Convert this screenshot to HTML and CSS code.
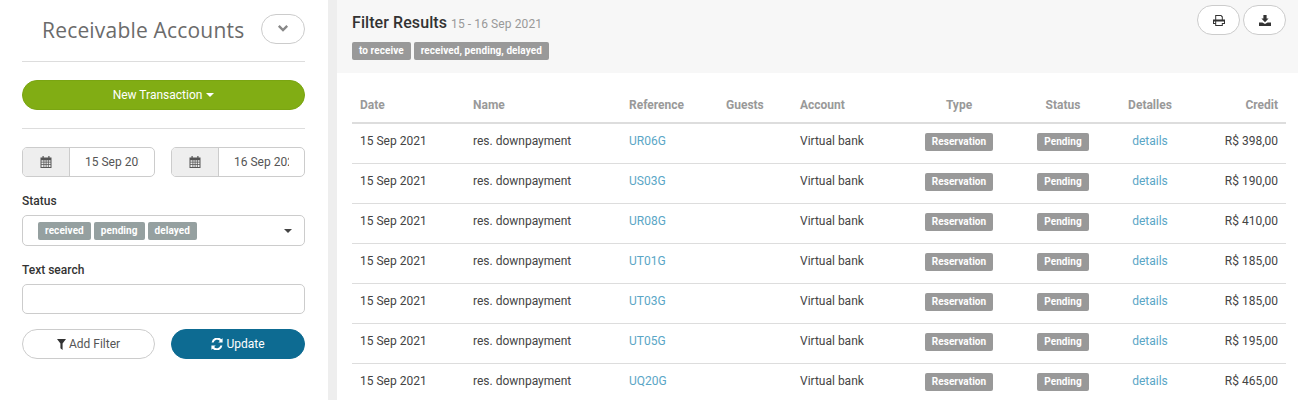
FILE: index.html
```html
<!DOCTYPE html>
<html lang="en">
<head>
<meta charset="utf-8">
<title>Receivable Accounts</title>
<link rel="stylesheet" href="styles.css">
</head>
<body>
<svg class="defs" width="0" height="0" aria-hidden="true">
  <symbol id="i-cal" viewBox="0 0 12 12"><path fill="currentColor" fill-rule="evenodd" d="M2.5 0h1.2v1.6h4.6V0h1.2v1.6H11.5V12H.5V1.6h2zM1.5 4.2v1.6h2V4.2zm2.800 0v1.600h1.400V4.200zm2.200 0v1.600h1.400V4.200zm2.200 0v1.600h1.800V4.200zM1.500 6.600v1.600h2V6.600zm2.800 0v1.600h1.400V6.600zm2.200 0v1.600h1.400V6.600zm2.200 0v1.600h1.800V6.600zM1.500 9v2h2V9zm2.800 0v2h1.400V9zm2.200 0v2h1.400V9zm2.200 0v2h1.800V9z"/></symbol>
</svg>
<div class="page">
  <aside class="side">
    <div class="side-head">
      <h1 class="side-title">Receivable Accounts</h1>
      <button class="btn chevron-btn" type="button" aria-label="Collapse">
        <svg width="12" height="9" viewBox="0 0 12 9"><path d="M1.800 1.800 6 6l4.200-4.200" fill="none" stroke="#888" stroke-width="2.400"/></svg>
      </button>
    </div>
    <hr class="rule">
    <button class="btn new-btn" type="button">New Transaction <span class="caret caret-white"></span></button>
    <hr class="rule rule-lower">
    <div class="dates">
      <div class="date-group date-from">
        <span class="date-addon"><svg class="cal" width="12" height="12"><use href="#i-cal"/></svg></span>
        <span class="date-value">15 Sep 2021</span>
      </div>
      <div class="date-group date-to">
        <span class="date-addon"><svg class="cal" width="12" height="12"><use href="#i-cal"/></svg></span>
        <span class="date-value">16 Sep 2021</span>
      </div>
    </div>
    <label class="field-label status-label">Status</label>
    <div class="select-box">
      <span class="tag tag-slate">received</span>
      <span class="tag tag-slate">pending</span>
      <span class="tag tag-slate">delayed</span>
      <span class="caret caret-dark select-caret"></span>
    </div>
    <label class="field-label search-label">Text search</label>
    <div class="text-input"></div>
    <div class="actions">
      <button class="btn filter-btn" type="button">
        <svg width="9" height="11" viewBox="0 0 10 11" preserveAspectRatio="none"><path d="M0 0h10L6.200 4.600V11L3.800 9.200V4.600z" fill="#333"/></svg>
        Add Filter
      </button>
      <button class="btn update-btn" type="button">
        <svg width="12" height="12" viewBox="0 0 12 12"><path d="M10.200 1.300 11.600.2v4.300H7.300l1.600-1.600A3.700 3.700 0 0 0 2.600 4.400H.6a5.600 5.600 0 0 1 9.600-3.100zM1.800 10.700.4 11.800V7.500h4.300L3.100 9.100a3.700 3.700 0 0 0 6.300-1.500h2a5.600 5.600 0 0 1-9.600 3.100z" fill="#fff"/></svg>
        Update
      </button>
    </div>
  </aside>
  <main class="main">
    <header class="main-head">
      <div class="head-text">
        <h2 class="results-title">Filter Results <small class="results-range">15 - 16 Sep 2021</small></h2>
        <div class="head-tags">
          <span class="tag tag-grey">to receive</span>
          <span class="tag tag-grey">received, pending, delayed</span>
        </div>
      </div>
      <div class="head-actions">
        <button class="btn icon-btn" type="button" aria-label="Print">
          <svg width="12" height="11" viewBox="0 0 12 11"><path fill="#333" fill-rule="evenodd" d="M2.200 0h6l1.600 1.600V4.600H12V9H9.800v2H2.200V9H0V4.600h2.200zM3.200 1v3.600h5.600V2.200L7.800 1zM1 6.500V8h1.200V6.500zm2.200 0V10h5.600V6.500zm5.600 0V8H11V6.500z"/></svg>
        </button>
        <button class="btn icon-btn" type="button" aria-label="Download">
          <svg width="12" height="11" viewBox="0 0 12 11"><path fill="#333" d="M4.400 0h3.200v3.600h2L6 7.200 2.400 3.600h2zM0 7.400h3.400L6 9l2.600-1.600H12V11H0z"/></svg>
        </button>
      </div>
    </header>
    <table class="results">
      <colgroup>
        <col class="c-date"><col class="c-name"><col class="c-ref"><col class="c-guests"><col class="c-account"><col class="c-type"><col class="c-status"><col class="c-details"><col class="c-credit">
      </colgroup>
      <thead>
        <tr><th>Date</th><th>Name</th><th>Reference</th><th>Guests</th><th>Account</th><th class="mid">Type</th><th class="mid">Status</th><th class="mid">Detalles</th><th class="end">Credit</th></tr>
      </thead>
      <tbody>
        <tr><td>15 Sep 2021</td><td>res. downpayment</td><td><a class="link">UR06G</a></td><td></td><td>Virtual bank</td><td class="mid chip"><span class="tag tag-grey">Reservation</span></td><td class="mid chip"><span class="tag tag-grey">Pending</span></td><td class="mid"><a class="link">details</a></td><td class="end">R$ 398,00</td></tr>
        <tr><td>15 Sep 2021</td><td>res. downpayment</td><td><a class="link">US03G</a></td><td></td><td>Virtual bank</td><td class="mid chip"><span class="tag tag-grey">Reservation</span></td><td class="mid chip"><span class="tag tag-grey">Pending</span></td><td class="mid"><a class="link">details</a></td><td class="end">R$ 190,00</td></tr>
        <tr><td>15 Sep 2021</td><td>res. downpayment</td><td><a class="link">UR08G</a></td><td></td><td>Virtual bank</td><td class="mid chip"><span class="tag tag-grey">Reservation</span></td><td class="mid chip"><span class="tag tag-grey">Pending</span></td><td class="mid"><a class="link">details</a></td><td class="end">R$ 410,00</td></tr>
        <tr><td>15 Sep 2021</td><td>res. downpayment</td><td><a class="link">UT01G</a></td><td></td><td>Virtual bank</td><td class="mid chip"><span class="tag tag-grey">Reservation</span></td><td class="mid chip"><span class="tag tag-grey">Pending</span></td><td class="mid"><a class="link">details</a></td><td class="end">R$ 185,00</td></tr>
        <tr><td>15 Sep 2021</td><td>res. downpayment</td><td><a class="link">UT03G</a></td><td></td><td>Virtual bank</td><td class="mid chip"><span class="tag tag-grey">Reservation</span></td><td class="mid chip"><span class="tag tag-grey">Pending</span></td><td class="mid"><a class="link">details</a></td><td class="end">R$ 185,00</td></tr>
        <tr><td>15 Sep 2021</td><td>res. downpayment</td><td><a class="link">UT05G</a></td><td></td><td>Virtual bank</td><td class="mid chip"><span class="tag tag-grey">Reservation</span></td><td class="mid chip"><span class="tag tag-grey">Pending</span></td><td class="mid"><a class="link">details</a></td><td class="end">R$ 195,00</td></tr>
        <tr><td>15 Sep 2021</td><td>res. downpayment</td><td><a class="link">UQ20G</a></td><td></td><td>Virtual bank</td><td class="mid chip"><span class="tag tag-grey">Reservation</span></td><td class="mid chip"><span class="tag tag-grey">Pending</span></td><td class="mid"><a class="link">details</a></td><td class="end">R$ 465,00</td></tr>
      </tbody>
    </table>
  </main>
</div>
</body>
</html>
```
FILE: styles.css
```css
* { box-sizing: border-box; }
html, body { margin: 0; height: 400px; overflow: hidden; background: #fff; }
body { font-family: Roboto, "Liberation Sans", sans-serif; font-size: 12px; color: #333; }
.defs { position: absolute; }
.page { display: flex; height: 400px; }

/* Sidebar */
.side { flex: 0 0 328px; padding: 13px 23px 0 22px; }
.side-head { display: flex; align-items: center; justify-content: space-between; height: 32px; padding-left: 20px; }
.side-title { margin: 2px 0 0; font-family: "Open Sans", sans-serif; font-weight: 400; font-size: 21px; line-height: 30px; letter-spacing: .19px; color: #6b6b6b; white-space: nowrap; }
.rule { margin: 16px 0 0; border: 0; border-top: 1px solid #ddd; height: 0; }
.rule-lower { margin-top: 18px; }

.btn { display: flex; align-items: center; justify-content: center; gap: 3px; font: inherit; border-radius: 16px; cursor: pointer; height: 30px; }
.chevron-btn { width: 44px; background: #fff; border: 1px solid #ccc; padding: 0 0 2px; }
.new-btn { width: 100%; margin-top: 18px; background: #81ad14; border: 1px solid #7aa512; color: #fff; gap: 4px; }
.caret { display: inline-block; width: 0; height: 0; border-left: 4px solid transparent; border-right: 4px solid transparent; border-top: 4px solid; }
.caret-white { border-top-color: #fff; }
.caret-dark { border-top-color: #444; }

.dates { display: flex; justify-content: space-between; margin-top: 18px; }
.date-group { display: flex; height: 30px; border: 1px solid #ccc; border-radius: 5px; overflow: hidden; }
.date-from { width: 133px; }
.date-to { width: 134px; }
.date-addon { flex: 0 0 47px; display: flex; align-items: center; justify-content: center; background: #eee; border-right: 1px solid #ccc; }
.cal { color: #555; }
.date-value { flex: 1; margin: 0 15px; overflow: hidden; white-space: nowrap; line-height: 28px; color: #555; }

.field-label { display: block; font-weight: 500; color: #333; line-height: 14px; }
.status-label { margin-top: 17px; }
.search-label { margin-top: 17px; }

.select-box { display: flex; align-items: center; gap: 3px; height: 31px; margin-top: 7px; padding: 0 12px 0 15px; border: 1px solid #ccc; border-radius: 5px; }
.select-caret { margin-left: auto; }

.tag { display: inline-block; height: 18px; padding: 0 7px; border-radius: 2px; font-size: 10px; font-weight: 700; letter-spacing: .07px; line-height: 18px; color: #fff; white-space: nowrap; }
.tag-slate { background: #95a0a0; }
.tag-grey { background: #999; }

.text-input { height: 30px; margin-top: 7px; border: 1px solid #ccc; border-radius: 5px; }
.actions { display: flex; justify-content: space-between; margin-top: 15px; }
.filter-btn { width: 133px; background: #fff; border: 1px solid #ccc; color: #555; }
.update-btn { width: 134px; background: #0d6b92; border: 1px solid #0d6b92; color: #fff; }

/* Main */
.main { flex: 1; min-width: 0; border-left: 9px solid #eee; }
.main-head { display: flex; justify-content: space-between; height: 73px; padding: 5px 12px 0 15px; background: #f7f7f7; }
.results-title { margin: 6px 0 0; font-size: 16px; font-weight: 500; letter-spacing: .08px; line-height: 24px; color: #333; }
.results-range { font-size: 12px; font-weight: 400; letter-spacing: .1px; color: #999; }
.head-tags { display: flex; gap: 3px; margin-top: 6px; }
.head-actions { display: flex; gap: 3px; }
.icon-btn { width: 43px; background: #fff; border: 1px solid #ccc; }

.results { width: 934px; margin: 11px 0 0 15px; border-collapse: collapse; table-layout: fixed; }
.c-date { width: 113px; }
.c-name { width: 156px; }
.c-ref { width: 97px; }
.c-guests { width: 74px; }
.c-account { width: 108px; }
.c-type { width: 118px; }
.c-status { width: 90px; }
.c-details { width: 84px; }
.c-credit { width: 94px; }
.results th { height: 39px; padding: 4px 8px 0; border-bottom: 2px solid #ddd; font-weight: 700; color: #999; text-align: left; }
.results td { height: 40px; padding: 0 8px 4px; border-bottom: 1px solid #ddd; color: #444; white-space: nowrap; }
.results td.chip { padding-bottom: 2px; }
.results th.mid, .results td.mid { text-align: center; }
.results th.end, .results td.end { text-align: right; }
.link { color: #5aa6c6; }
```
